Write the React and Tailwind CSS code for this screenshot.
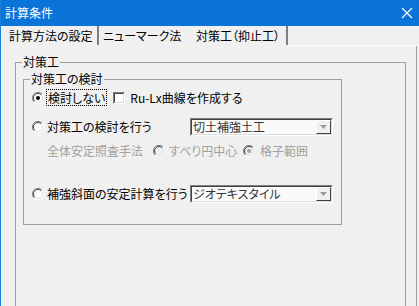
import React from "react";

// 3D classic radio button
function Radio({ checked = false, disabled = false }) {
  const fill = disabled ? "#f0f0f0" : "#ffffff";
  const dot = disabled ? "#a0a0a0" : "#000000";
  return (
    <svg width="12" height="12" viewBox="0 0 12 12" className="shrink-0">
      <circle cx="6" cy="6" r="5.5" fill={fill} />
      <path d="M10 2 A5.6 5.6 0 0 0 2 10" stroke="#808080" strokeWidth="1" fill="none" />
      <path d="M9.2 2.8 A4.5 4.5 0 0 0 2.8 9.2" stroke="#404040" strokeWidth="1" fill="none" />
      <path d="M2 10 A5.6 5.6 0 0 0 10 2" stroke="#ffffff" strokeWidth="1" fill="none" />
      <path d="M2.8 9.2 A4.5 4.5 0 0 0 9.2 2.8" stroke="#dcdcdc" strokeWidth="1" fill="none" />
      {checked && <circle cx="6" cy="6" r="2" fill={dot} />}
    </svg>
  );
}

function CheckBox() {
  return (
    <div className="w-[12px] h-[12px] shrink-0 border border-t-[#808080] border-l-[#808080] border-b-white border-r-white">
      <div className="w-full h-full border border-t-[#404040] border-l-[#404040] border-b-[#dcdcdc] border-r-[#dcdcdc] bg-white" />
    </div>
  );
}

function Combo({ text }) {
  return (
    <div className="w-[143px] h-[18px] shrink-0 flex border border-t-[#808080] border-l-[#808080] border-b-white border-r-white">
      <div className="flex-1 flex items-center border border-t-[#404040] border-l-[#404040] border-b-[#dcdcdc] border-r-[#dcdcdc] bg-[#fafafa]">
        <span className="pl-[1px] text-[#333333]">{text}</span>
        <div className="ml-auto w-[15px] h-full flex items-center justify-center bg-[#f0f0f0] border border-t-white border-l-white border-b-[#404040] border-r-[#404040]">
          <svg width="7" height="4" viewBox="0 0 7 4">
            <path d="M0 0 H7 L3.5 4 Z" fill="#9a9a9a" />
          </svg>
        </div>
      </div>
    </div>
  );
}

export default function App() {
  return (
    <div className="w-[419px] h-[306px] overflow-hidden bg-[#f0f0f0] border-l border-[#1a7fd8] flex flex-col text-[12px] leading-none text-black [font-family:'Noto_Sans_CJK_JP','Liberation_Sans',sans-serif] [font-feature-settings:'palt']">
      {/* タイトルバー */}
      <div className="h-[26px] shrink-0 bg-[#0b74d8] text-white flex items-center justify-between pl-[4px] pr-[6px]">
        <span>計算条件</span>
        <svg width="12" height="12" viewBox="0 0 12 12">
          <path d="M1 1 L11 11 M11 1 L1 11" stroke="#ffffff" strokeWidth="1.2" />
        </svg>
      </div>

      {/* タブ */}
      <div className="h-[20px] shrink-0 flex">
        <div className="w-[98px] flex items-center pl-[8px] border-r-2 border-[#808080] mb-[1px]">計算方法の設定</div>
        <div className="w-[91px] flex items-center pl-[4px] mb-[1px]">ニューマーク法</div>
        <div className="w-[98px] flex items-center pl-[6px] border-r-2 border-[#808080] mb-[1px]">対策工（抑止工）</div>
        <div className="flex-1 border-b border-white mr-[2px]" />
      </div>

      {/* パネル */}
      <div className="flex-1 border-r border-[#a0a0a0] mr-[2px]">
        <div className="relative mt-[16px] ml-[14px] w-[391px] h-[300px] border border-[#a0a0a0]">
          <span className="absolute left-[6px] top-[-7px] bg-[#f0f0f0] px-[1px]">対策工</span>

          <div className="relative mt-[16px] ml-[7px] w-[319px] h-[146px] border border-[#a0a0a0]">
            <span className="absolute left-[6px] top-[-7px] bg-[#f0f0f0] px-[1px]">対策工の検討</span>

            {/* 検討しない */}
            <div className="mt-[9px] h-[17px] flex items-center pl-[8px]">
              <Radio checked />
              <div className="ml-[2px] h-[17px] flex items-center px-[1px] border border-dotted border-black">検討しない</div>
              <div className="ml-[6px]">
                <CheckBox />
              </div>
              <span className="ml-[5px]">Ru-Lx曲線を作成する</span>
            </div>

            {/* 対策工の検討を行う */}
            <div className="mt-[12px] h-[18px] flex items-center">
              <div className="w-[166px] flex items-center pl-[8px]">
                <Radio />
                <span className="ml-[3px]">対策工の検討を行う</span>
              </div>
              <Combo text="切土補強土工" />
            </div>

            {/* 全体安定照査手法 */}
            <div className="mt-[7px] h-[16px] flex items-center pl-[23px] text-[#a0a0a0]">
              <span className="w-[106px]">全体安定照査手法</span>
              <Radio disabled />
              <span className="ml-[4px] w-[70px]">すべり円中心</span>
              <div className="ml-[4px]">
                <Radio checked disabled />
              </div>
              <span className="ml-[5px]">格子範囲</span>
            </div>

            {/* 補強斜面の安定計算を行う */}
            <div className="mt-[26px] h-[18px] flex items-center">
              <div className="w-[166px] flex items-center pl-[8px]">
                <Radio />
                <span className="ml-[3px]">補強斜面の安定計算を行う</span>
              </div>
              <Combo text="ジオテキスタイル" />
            </div>
          </div>
        </div>
      </div>
    </div>
  );
}
